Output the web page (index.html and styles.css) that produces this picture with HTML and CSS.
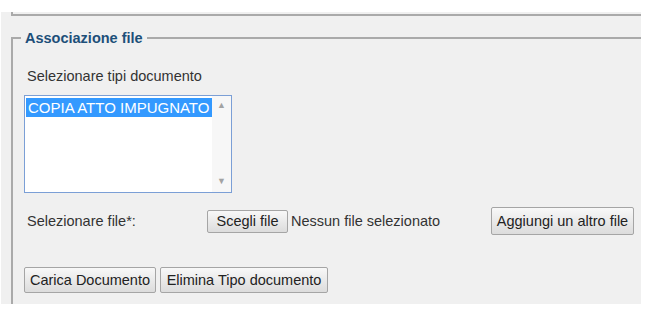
FILE: index.html
```html
<!DOCTYPE html>
<html lang="it">
<head>
    <meta charset="UTF-8">
    <title>Associazione file</title>
    <link rel="stylesheet" href="styles.css">
</head>
<body>
    <div class="panel">
        <div class="prev"></div>
        <fieldset class="box">
            <legend>Associazione file</legend>
            <p class="label">Selezionare tipi documento</p>
            <div class="listbox">
                <div class="options">
                    <div class="option selected">COPIA ATTO IMPUGNATO</div>
                </div>
                <div class="scroll">
                    <span class="arrow">&#9650;</span>
                    <span class="arrow">&#9660;</span>
                </div>
            </div>
            <div class="file-row">
                <span class="label file-label">Selezionare file*:</span>
                <button class="btn btn-choose">Scegli file</button>
                <span class="nofile">Nessun file selezionato</span>
                <button class="btn btn-add">Aggiungi un altro file</button>
            </div>
            <div class="actions">
                <button class="btn">Carica Documento</button>
                <button class="btn btn-del">Elimina Tipo documento</button>
            </div>
        </fieldset>
    </div>
</body>
</html>
```

FILE: styles.css
```css
*{
    margin: 0px;
    padding: 0px;
    box-sizing: border-box;
}
body{
    background: #ffffff;
    font-family: "Liberation Sans", Arial, sans-serif;
    font-size: 14.5px;
    color: #333333;
}
.panel{
    margin: 12px 0px 0px 1px;
    width: 640px;
    height: 292px;
    background: #f0f0f0;
    overflow: hidden;
}
.prev{
    margin-left: 10px;
    width: 700px;
    height: 4px;
    border-left: 2px solid #aaaaaa;
    border-bottom: 2px solid #aaaaaa;
}
.box{
    margin: 14px 0px 0px 10px;
    width: 700px;
    height: 320px;
    border: 2px solid #aaaaaa;
    padding: 0px 8px;
}
.box legend{
    padding: 0px 4px;
    font-size: 14.5px;
    font-weight: bold;
    color: #1d4f79;
}
.label{
    margin: 22px 0px 0px 6px;
}
.listbox{
    display: flex;
    margin: 11px 0px 0px 3px;
    width: 208px;
    height: 98px;
    border: 1px solid #7b9fd6;
    background: #ffffff;
}
.options{
    flex: 1;
    padding: 2px 0px 0px 1px;
}
.option{
    padding: 1px 2px;
    font-size: 15px;
    line-height: 17px;
    white-space: nowrap;
}
.selected{
    background: #3399ff;
    color: #ffffff;
}
.scroll{
    display: flex;
    flex-direction: column;
    justify-content: space-between;
    align-items: center;
    width: 19px;
    padding: 4px 0px 6px;
    background: #f7f7f7;
}
.arrow{
    font-size: 9px;
    color: #a3a3a3;
}
.file-row{
    display: flex;
    align-items: center;
    margin-top: 14px;
}
.file-label{
    margin: 0px 0px 0px 6px;
    width: 180px;
}
.btn{
    height: 24px;
    padding: 0px;
    white-space: nowrap;
    border: 1px solid #a5a5a5;
    border-radius: 2px;
    background: linear-gradient(#f8f8f8, #dcdcdc);
    font-family: "Liberation Sans", Arial, sans-serif;
    font-size: 14.5px;
    color: #222222;
}
.btn-choose{
    width: 81px;
    height: 23px;
}
.nofile{
    margin-left: 3px;
    width: 200px;
    white-space: nowrap;
}
.btn-add{
    width: 143px;
    height: 28px;
}
.actions{
    display: flex;
    gap: 4px;
    margin: 32px 0px 0px 3px;
}
.actions .btn{
    width: 132px;
    height: 26px;
}
.actions .btn-del{
    width: 168px;
}
```
